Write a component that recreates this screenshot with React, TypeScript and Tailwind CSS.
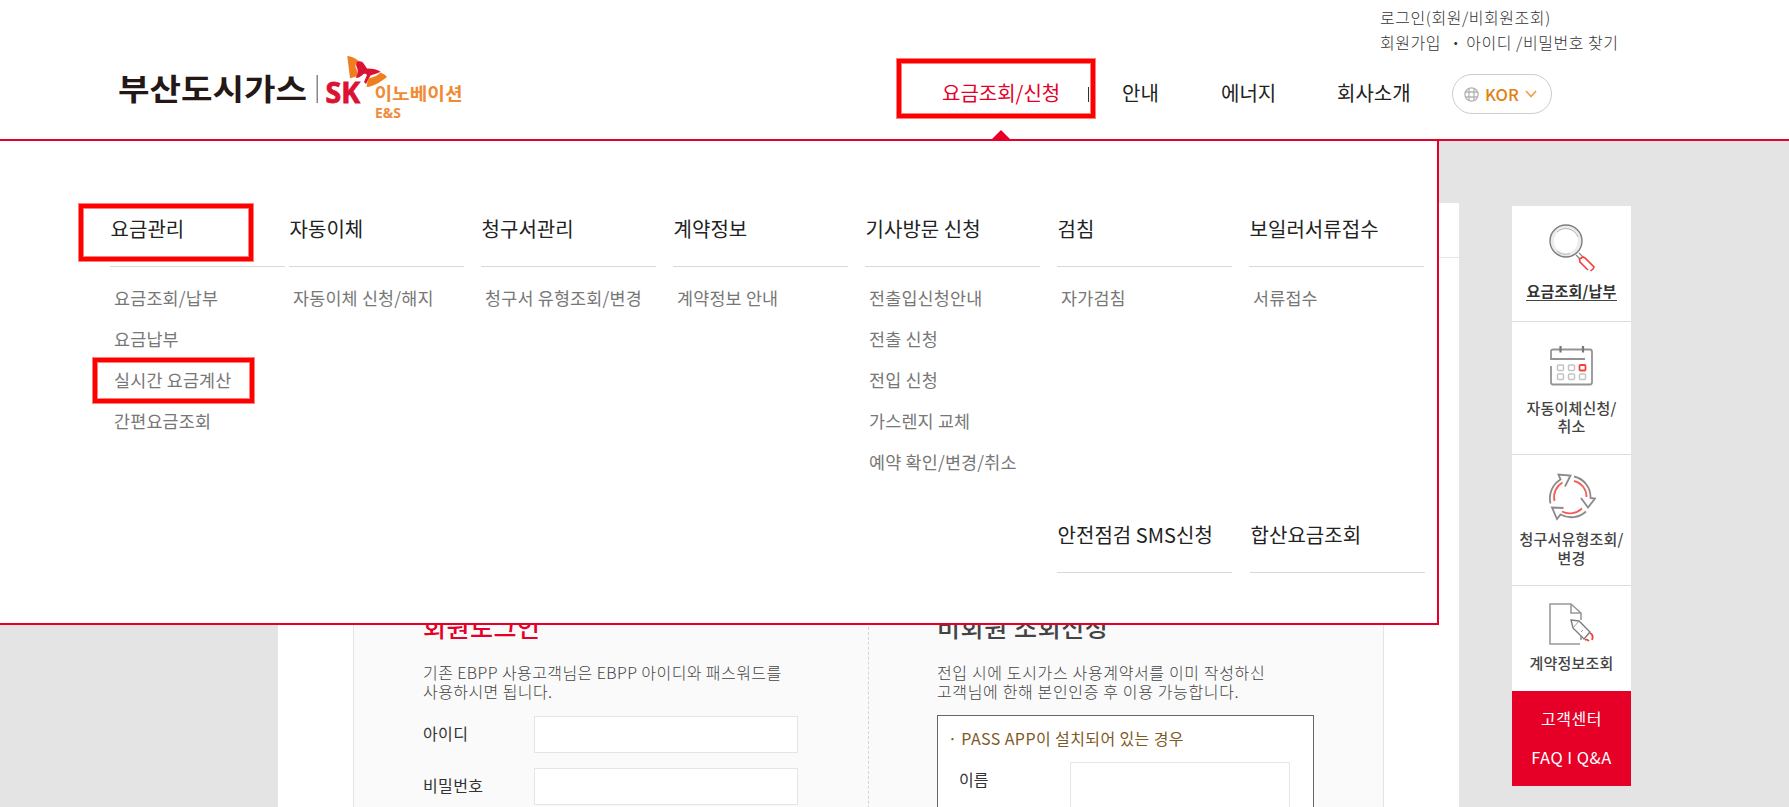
import type { ReactNode } from 'react';

interface MenuColumn {
  title: string;
  items: string[];
}

const MENU_COLUMNS: MenuColumn[] = [
  { title: '요금관리', items: ['요금조회/납부', '요금납부', '실시간 요금계산', '간편요금조회'] },
  { title: '자동이체', items: ['자동이체 신청/해지'] },
  { title: '청구서관리', items: ['청구서 유형조회/변경'] },
  { title: '계약정보', items: ['계약정보 안내'] },
  {
    title: '기사방문 신청',
    items: ['전출입신청안내', '전출 신청', '전입 신청', '가스렌지 교체', '예약 확인/변경/취소'],
  },
  { title: '검침', items: ['자가검침'] },
  { title: '보일러서류접수', items: ['서류접수'] },
];

function Logo() {
  return (
    <svg width="344" height="66" viewBox="0 0 344 66" className="ml-[119px] shrink-0">
      <text x="-1" y="43.5" textLength="189" fontSize="30" fontWeight="700" fill="#231815" lengthAdjust="spacingAndGlyphs">
        부산도시가스
      </text>
      <rect x="197.5" y="19" width="1.5" height="28" fill="#888" />
      <text
        x="206.5"
        y="46.5"
        textLength="34.5"
        lengthAdjust="spacingAndGlyphs"
        fontSize="28"
        fontWeight="700"
        fill="#dc1232"
        stroke="#dc1232"
        strokeWidth="0.8"
        className="font-['Open_Sans',sans-serif]"
      >
        SK
      </text>
      <path d="M228.300 0C233 0.500 238 3 240 5.500C236.500 7 235.500 10 237.500 13L239 20L231 22.300Z" fill="#f07d1e" />
      <path
        d="M237.500 6.500C239 5 243 4.500 245 8L248 12.500C253 12.300 258 13.500 261.700 15.700C258 18 254 18 251.500 19.500L247 28L245 26L248 19C246.500 17 244.500 17.500 243.500 19L240 21.500L236.800 22C238.500 18.500 239 16 238.500 13C237.500 11 236.500 9 237.500 6.500Z"
        fill="#dc1232"
      />
      <path d="M261.500 16.500C264 17.500 267 19.500 268 21C262 26 254 30.500 247.500 31L249 23C253 20.500 257 21.500 261.500 16.500Z" fill="#f07d1e" />
      <text x="255.5" y="44" textLength="88" lengthAdjust="spacingAndGlyphs" fontSize="17.500" fontWeight="700" fill="#f08a35">
        이노베이션
      </text>
      <text
        x="256"
        y="62"
        textLength="26"
        lengthAdjust="spacingAndGlyphs"
        fontSize="13.500"
        fontWeight="700"
        fill="#f08c3c"
        className="font-['Open_Sans',sans-serif]"
      >
        E&amp;S
      </text>
    </svg>
  );
}

function GlobeIcon() {
  return (
    <svg width="15" height="15" viewBox="0 0 15 15" fill="none" stroke="#b4b4b4" strokeWidth="1.3">
      <circle cx="7.500" cy="7.500" r="6.600" />
      <path d="M5 1.500V13.500M10 1.500V13.500M1 5H14M1 10H14" />
    </svg>
  );
}

function SearchIcon() {
  return (
    <svg width="46" height="48" viewBox="0 0 46 48" fill="none">
      <circle cx="17" cy="17" r="14" stroke="#ececec" strokeWidth="4" />
      <circle cx="17" cy="17" r="16" stroke="#7d7d7d" strokeWidth="1.400" />
      <path d="M8 8A13 13 0 0 1 29 13M8 27A13 13 0 0 0 21 29.500" stroke="#bbb" />
      <path d="M27 31L31 35M30 29L34 33" stroke="#888" strokeWidth="1.200" />
      <path d="M39 46L31 38L30.500 35L34 33L36 34L45 43L44 45L41.500 47" stroke="#f5403c" strokeWidth="1.600" />
    </svg>
  );
}

function CalendarIcon() {
  return (
    <svg width="43" height="40" viewBox="0 0 43 40" fill="none">
      <path d="M35 13H1V5Q1 3.500 3 3.500H40Q42 3.500 42 6V36Q42 38.500 40 38.500H3Q1 38.500 1 36V20" stroke="#949494" strokeWidth="1.800" />
      <path d="M10.500 0V6.500M33 0V6.500" stroke="#777" strokeWidth="2.200" />
      <g stroke="#c4c4c4" strokeWidth="1.500">
        <rect x="7.500" y="19" width="6" height="5.500" rx="1" />
        <rect x="18.500" y="19" width="6" height="5.500" rx="1" />
        <rect x="7.500" y="28" width="6" height="5.500" rx="1" />
        <rect x="18.500" y="28" width="6" height="5.500" rx="1" />
        <rect x="29.500" y="28" width="6" height="5.500" rx="1" />
      </g>
      <rect x="29.500" y="19" width="6" height="5.500" rx="1" stroke="#f5403c" strokeWidth="1.800" />
    </svg>
  );
}

function CycleIcon() {
  return (
    <svg width="48" height="48" viewBox="0 0 48 48" fill="none">
      <g stroke="#8a8a8a" strokeWidth="1.800">
        <path d="M2.500 30.500A22 22 0 0 1 12.500 6.500L10.500 1.500L22.500 2.500L17 13.500" />
        <path d="M26 3.500A21 21 0 0 1 42.500 25L47 25.500L40 34.500L33 25" />
        <path d="M38 38.500A22 22 0 0 1 12.500 41.500L9 46L4 34.500L15.500 35" />
      </g>
      <g stroke="#f75a55" strokeWidth="1.800">
        <path d="M6.500 28A17 17 0 0 1 14.500 9.500" />
        <path d="M26 8A16 16 0 0 1 38.500 24" />
        <path d="M34 35.500A18 18 0 0 1 14 38.500" />
      </g>
    </svg>
  );
}

function ContractIcon() {
  return (
    <svg width="46" height="42" viewBox="0 0 46 42" fill="none">
      <path d="M31 41H1V1H22L32 10V17M32 32V37M22 1V10H32" stroke="#999" strokeWidth="1.600" />
      <path d="M22 17L30 18L41 29L35 36L24 25Z" fill="#fff" stroke="#7d7d7d" strokeWidth="1.400" />
      <path d="M24 25L30 18M32 29L34 27" stroke="#999" />
      <path d="M36 37Q38 36 40 38M41 30Q45 32 43 37" stroke="#f5403c" strokeWidth="1.800" />
    </svg>
  );
}

// Red frame marking a step on the page. The half-tone rings soften both edges.
function Highlight({ className }: { className: string }) {
  return (
    <div
      className={`pointer-events-none absolute z-30 border-4 border-[#ff0000] ring-1 inset-ring-1 ring-[#ff0000]/50 inset-ring-[#ff0000]/50 ${className}`}
    />
  );
}

function MenuTitle({ children }: { children: ReactNode }) {
  return (
    <h3 className="h-[60px] w-[175px] border-b border-[#d8d8d8] pl-[0.5px] text-xl leading-[43px] tracking-[0.05px] text-[#222]">
      {children}
    </h3>
  );
}

function MegaMenu() {
  return (
    <div className="absolute top-[141px] left-0 z-10 h-[484px] w-[1439px] border-r-2 border-b-2 border-[#e60027] bg-white pt-[66px] pl-[110px]">
      <div className="flex h-[306px]">
        {MENU_COLUMNS.map((column, index) => (
          <div key={column.title} className={index === 0 ? 'w-[179px] shrink-0' : 'w-[192px] shrink-0'}>
            <MenuTitle>{column.title}</MenuTitle>
            <ul className="pt-[10px] pl-[4px] text-[17.4px] tracking-[0.2px] text-[#777]">
              {column.items.map((item) => (
                <li key={item} className="h-[41px] leading-[41px] whitespace-nowrap">
                  {item}
                </li>
              ))}
            </ul>
          </div>
        ))}
      </div>
      <div className="ml-[947px] flex gap-[18px]">
        <MenuTitle>안전점검 SMS신청</MenuTitle>
        <MenuTitle>합산요금조회</MenuTitle>
      </div>
    </div>
  );
}

function Header() {
  return (
    <header className="h-[141px] border-b-2 border-[#e60027] bg-white">
      <div className="ml-[1380px] h-[56px] pt-[5px] text-[16px] leading-[25px] font-light tracking-[0.55px] whitespace-pre text-[#333]">
        <p>로그인(회원/비회원조회)</p>
        <p>
          회원가입<span className="mr-[5px] ml-[10px] font-bold">·</span>아이디 /비밀번호 찾기
        </p>
      </div>
      <div className="flex">
        <Logo />
        <nav className="ml-[479px] flex pt-[17px] text-xl leading-[40px] whitespace-nowrap text-[#222]">
          <div className="relative w-[146px] text-[#e60027]">
            요금조회/신청
            <svg width="20" height="10" viewBox="0 0 20 10" className="absolute top-[57px] left-[49px]">
              <path d="M10 0L20 10H0Z" fill="#e60027" />
            </svg>
          </div>
          <i className="mt-[14px] h-[15px] w-px bg-[#333]" />
          <span className="ml-[33px] w-[99px]">안내</span>
          <span className="w-[116px]">에너지</span>
          <span className="w-[115px]">회사소개</span>
        </nav>
        <button className="mt-[18px] flex h-[40px] w-[100px] items-center rounded-full border border-[#ccc] pl-[11px]">
          <GlobeIcon />
          <span className="ml-[6px] w-[40px] text-left text-[16.5px] leading-none font-medium text-[#e08214]">KOR</span>
          <svg width="12" height="8" viewBox="0 0 12 8" fill="none" stroke="#f0a050" strokeWidth="1.800">
            <path d="M1 1L6 6.500L11 1" />
          </svg>
        </button>
      </div>
    </header>
  );
}

function LoginPanel() {
  return (
    <section className="w-[515px] border-r border-dashed border-[#d4d4d4] pl-[69px]">
      <h2 className="text-[25px] leading-[28px] font-medium tracking-[0.5px] text-[#e60027]">회원로그인</h2>
      <p className="mt-[23px] text-[16px] leading-[19px] font-light tracking-[0.42px] whitespace-nowrap text-[#444]">
        기존 EBPP 사용고객님은 EBPP 아이디와 패스워드를
        <br />
        사용하시면 됩니다.
      </p>
      <div className="mt-[15px] flex flex-col gap-[15px] text-[16px] tracking-[0.4px] text-[#333]">
        {['아이디', '비밀번호'].map((label) => (
          <label key={label} className="flex h-[37px] items-center">
            <span className="w-[111px] pb-[3px]">{label}</span>
            <input className="h-[37px] w-[264px] border border-[#e5e5e5] bg-white" />
          </label>
        ))}
      </div>
    </section>
  );
}

function GuestPanel() {
  return (
    <section className="pl-[68px]">
      <h2 className="text-[25px] leading-[28px] font-medium tracking-[0.6px] text-[#444]">비회원 조회신청</h2>
      <p className="mt-[23px] text-[16px] leading-[19px] font-light tracking-[0.65px] whitespace-nowrap text-[#444]">
        전입 시에 도시가스 사용계약서를 이미 작성하신
        <br />
        고객님에 한해 본인인증 후 이용 가능합니다.
      </p>
      <div className="mt-[14px] h-[200px] w-[377px] border border-[#666] bg-white pt-[11px] pl-[10px]">
        <p className="text-[16px] leading-[22px] tracking-[0.4px] text-[#7d5a24]">· PASS APP이 설치되어 있는 경우</p>
        <label className="mt-[13px] flex text-[16px] text-[#333]">
          <span className="w-[122px] pt-[5px] pl-[11px]">이름</span>
          <input className="h-[60px] w-[220px] border border-[#e5e5e5] bg-white" />
        </label>
      </div>
    </section>
  );
}

function QuickMenu() {
  return (
    <aside className="mt-[3px] ml-[53px] w-[119px] text-center text-[15px] leading-[18px] font-medium tracking-[0.2px] whitespace-nowrap text-[#444]">
      <a className="flex h-[116px] flex-col items-center border-b border-[#ddd] bg-white pt-[18px]">
        <SearchIcon />
        <span className="mt-[10px] border-b border-[#444] font-bold text-[#333]">요금조회/납부</span>
      </a>
      <a className="flex h-[133px] flex-col items-center border-b border-[#ddd] bg-white pt-[24px]">
        <CalendarIcon />
        <span className="mt-[13px]">
          자동이체신청/
          <br />
          취소
        </span>
      </a>
      <a className="flex h-[131px] flex-col items-center border-b border-[#ddd] bg-white pt-[18px]">
        <CycleIcon />
        <span className="mt-[8px] leading-[19px]">
          청구서유형조회/
          <br />
          변경
        </span>
      </a>
      <a className="flex h-[105px] flex-col items-center bg-white pt-[17px]">
        <ContractIcon />
        <span className="mt-[9px]">계약정보조회</span>
      </a>
      <div className="h-[95px] bg-[#e60027] pt-[8px] text-[16px] leading-[39px] font-normal tracking-[0.5px] text-white">
        <p>고객센터</p>
        <p className="text-[16.5px]">FAQ I Q&amp;A</p>
      </div>
    </aside>
  );
}

export default function App() {
  return (
    <div className="relative h-[807px] w-[1789px] overflow-hidden bg-[#e4e4e4] font-['Noto_Sans_CJK_KR',sans-serif]">
      <Header />
      <MegaMenu />
      <main className="flex pt-[62px] pl-[278px]">
        <div className="h-[700px] w-[1181px] bg-white">
          <div className="h-[55px] border-b border-[#e5e5e5]" />
          <div className="ml-[75px] flex h-[640px] w-[1031px] border-x border-[#e5e5e5] bg-[#fafafa] pt-[354px]">
            <LoginPanel />
            <GuestPanel />
          </div>
        </div>
        <QuickMenu />
      </main>
      <Highlight className="top-[59px] left-[897px] h-[59px] w-[198px]" />
      <Highlight className="top-[204px] left-[79px] h-[57px] w-[174px]" />
      <Highlight className="top-[358px] left-[93px] h-[45px] w-[161px]" />
    </div>
  );
}
